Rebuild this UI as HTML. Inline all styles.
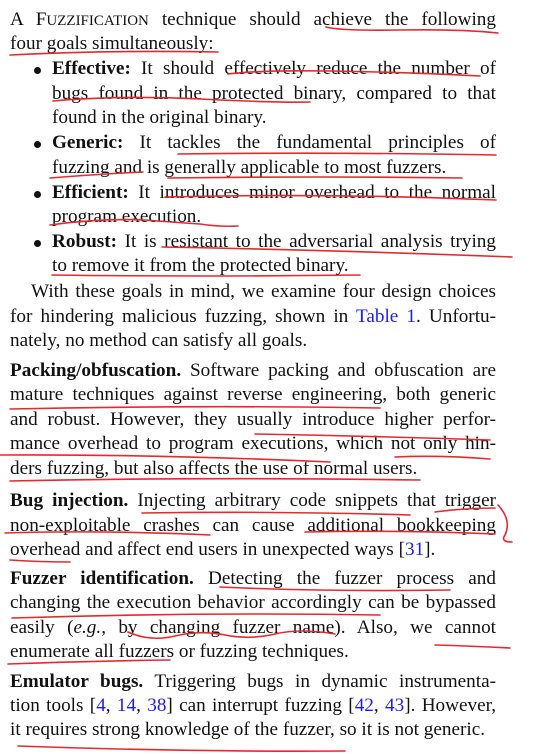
<!DOCTYPE html>
<html><head><meta charset="utf-8"><style>
html,body{margin:0;padding:0;background:#fff;}
body{width:539px;height:754px;position:relative;overflow:hidden;font-family:"Liberation Serif",serif;font-size:19.2px;color:#111;}
.l{position:absolute;line-height:20px;white-space:nowrap;text-align:justify;text-align-last:justify;}
.n{text-align-last:left;}
.f{left:10px;width:486px;}
.b{left:52px;width:444px;}
.d{position:absolute;width:7px;height:7px;border-radius:50%;background:#111;left:34px;}
b{font-weight:bold;}
a{color:#1a1aff;}
.sc{font-size:15px;}
svg{position:absolute;left:0;top:0;}
</style></head><body>
<div class="l f" style="top:10px">A F<span class="sc">UZZIFICATION</span> technique should achieve the following</div>
<div class="l f n" style="top:34px">four goals simultaneously:</div>
<div class="d" style="top:67px"></div>
<div class="l b" style="top:59px"><b>Effective:</b> It should effectively reduce the number of</div>
<div class="l b" style="top:84px">bugs found in the protected binary, compared to that</div>
<div class="l b n" style="top:108px">found in the original binary.</div>
<div class="d" style="top:141px"></div>
<div class="l b" style="top:133px"><b>Generic:</b> It tackles the fundamental principles of</div>
<div class="l b n" style="top:158px">fuzzing and is generally applicable to most fuzzers.</div>
<div class="d" style="top:191px"></div>
<div class="l b" style="top:183px"><b>Efficient:</b> It introduces minor overhead to the normal</div>
<div class="l b n" style="top:207px">program execution.</div>
<div class="d" style="top:240px"></div>
<div class="l b" style="top:232px"><b>Robust:</b> It is resistant to the adversarial analysis trying</div>
<div class="l b n" style="top:256px">to remove it from the protected binary.</div>
<div class="l" style="top:282px;left:31px;width:465px">With these goals in mind, we examine four design choices</div>
<div class="l f" style="top:307px">for hindering malicious fuzzing, shown in <a>Table 1</a>. Unfortu-</div>
<div class="l f n" style="top:331px">nately, no method can satisfy all goals.</div>
<div class="l f" style="top:361px"><b>Packing/obfuscation.</b> Software packing and obfuscation are</div>
<div class="l f" style="top:385px">mature techniques against reverse engineering, both generic</div>
<div class="l f" style="top:410px">and robust. However, they usually introduce higher perfor-</div>
<div class="l f" style="top:434px">mance overhead to program executions, which not only hin-</div>
<div class="l f n" style="top:459px">ders fuzzing, but also affects the use of normal users.</div>
<div class="l f" style="top:491px"><b>Bug injection.</b> Injecting arbitrary code snippets that trigger</div>
<div class="l f" style="top:516px">non-exploitable crashes can cause additional bookkeeping</div>
<div class="l f n" style="top:540px">overhead and affect end users in unexpected ways [<a>31</a>].</div>
<div class="l f" style="top:569px"><b>Fuzzer identification.</b> Detecting the fuzzer process and</div>
<div class="l f" style="top:593px">changing the execution behavior accordingly can be bypassed</div>
<div class="l f" style="top:618px">easily (<i>e.g.</i>, by changing fuzzer name). Also, we cannot</div>
<div class="l f n" style="top:642px">enumerate all fuzzers or fuzzing techniques.</div>
<div class="l f" style="top:672px"><b>Emulator bugs.</b> Triggering bugs in dynamic instrumenta-</div>
<div class="l f" style="top:696px">tion tools [<a>4</a>, <a>14</a>, <a>38</a>] can interrupt fuzzing [<a>42</a>, <a>43</a>]. However,</div>
<div class="l f n" style="top:720px">it requires strong knowledge of the fuzzer, so it is not generic.</div>
<svg width="539" height="754" fill="none" stroke="#e8282e" stroke-width="1.6" stroke-linecap="round">
<path d="M326 27 Q340 31 400 30 T498 33"/>
<path d="M10 55 Q110 50 218 52"/>
<path d="M228 74 Q260 70 330 71 T480 76"/>
<path d="M53 101 Q120 95 200 99 T310 102"/>
<path d="M178 154 Q330 152 496 155"/>
<path d="M50 178 Q100 174 143 172"/>
<path d="M168 178 Q320 176 462 178"/>
<path d="M165 197 Q330 193 496 200"/>
<path d="M50 225 Q100 218 145 220 Q170 222 200 224 Q220 227 238 226"/>
<path d="M162 247 Q330 250 512 257"/>
<path d="M52 275 Q200 277 360 275"/>
<path d="M10 409 Q200 405 380 408"/>
<path d="M255 434 Q370 436 490 440"/>
<path d="M0 455 Q150 454 330 462"/>
<path d="M395 457 Q440 455 490 459"/>
<path d="M10 481 Q200 477 420 480"/>
<path d="M142 513 Q280 511 410 515"/>
<path d="M435 512 Q465 508 495 508"/>
<path d="M498 505 Q512 520 505 535 Q500 542 512 542"/>
<path d="M5 533 Q100 530 210 535"/>
<path d="M305 532 Q400 530 495 534"/>
<path d="M10 560 Q40 562 70 562"/>
<path d="M220 587 Q330 592 450 590"/>
<path d="M12 618 Q200 612 380 615"/>
<path d="M128 632 Q150 642 175 636 T225 635 T275 634 T335 634"/>
<path d="M435 645 Q470 646 510 648"/>
<path d="M8 664 Q90 661 170 660"/>
<path d="M18 746 Q180 752 345 751"/>
</svg>
</body></html>
